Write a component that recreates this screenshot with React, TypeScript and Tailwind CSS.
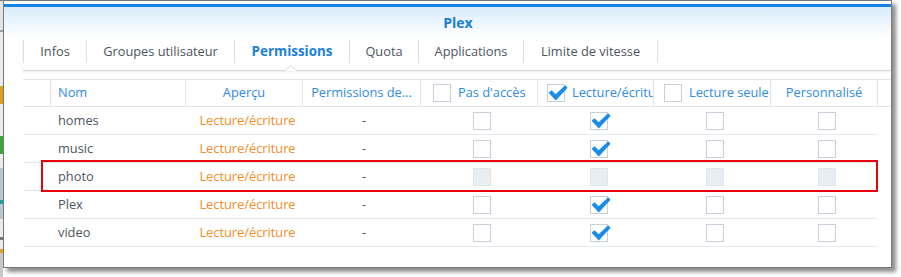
import clsx from "clsx";

type Row = {
  name: string;
  disabled?: boolean;
  rw: boolean;
};

const rows: Row[] = [
  { name: "homes", rw: true },
  { name: "music", rw: true },
  { name: "photo", rw: false, disabled: true },
  { name: "Plex", rw: true },
  { name: "video", rw: true },
];

const tabs = [
  { label: "Infos", w: "w-[63px]" },
  { label: "Groupes utilisateur", w: "w-[148px]" },
  { label: "Permissions", w: "w-[115px]", active: true },
  { label: "Quota", w: "w-[69px]" },
  { label: "Applications", w: "w-[105px]" },
  { label: "Limite de vitesse", w: "w-[135px]", last: true },
];

const cols = "grid grid-cols-[27px_135px_117px_118px_117px_116px_117px_107px]";

function Check({ checked, disabled }: { checked?: boolean; disabled?: boolean }) {
  return (
    <span
      className={clsx(
        "relative block w-[18px] h-[18px] shrink-0 border",
        disabled ? "bg-[#e9eef3] border-[#dfe5eb]" : "bg-white border-[#c7d0da]"
      )}
    >
      {checked && (
        <svg className="absolute -left-px -top-px overflow-visible" width="20" height="20" viewBox="0 0 20 20">
          <polygon points="1.6,8.8 4.6,6.2 8.6,10.2 18.2,1.2 20.6,3.8 8.8,16.4" fill="#1b8ce8" />
        </svg>
      )}
    </span>
  );
}

function LeftStrip() {
  return (
    <div className="w-[3px] flex flex-col shrink-0">
      <div className="h-px bg-[#7d7d7d]" />
      <div className="h-[29px] bg-[#e4e4e4]" />
      <div className="h-[2px] bg-[#a0a0a0]" />
      <div className="h-[54px] bg-[#ececec]" />
      <div className="h-[18px] bg-[#e0a020]" />
      <div className="h-[32px] bg-[#ececec]" />
      <div className="h-[18px] bg-[#3aa53a]" />
      <div className="h-[14px] bg-[#ececec]" />
      <div className="h-[32px] bg-[#b9c8d4]" />
      <div className="h-[4px] bg-[#1fa0a0]" />
      <div className="h-[15px] bg-[#b9c8d4]" />
      <div className="h-[18px] bg-[#ececec]" />
      <div className="h-[3px] bg-[#777]" />
      <div className="h-[9px] bg-[#ececec]" />
      <div className="h-[4px] bg-[#e0a020]" />
      <div className="flex-1 bg-[#c8c8c8]" />
    </div>
  );
}

export default function App() {
  return (
    <div
      className="relative w-[901px] h-[277px] bg-white overflow-hidden flex"
      style={{ fontFamily: '"Open Sans", "Noto Sans", sans-serif' }}
    >
      <LeftStrip />
      <div className="w-[889px] h-[268px] border border-[#7a7a7a] bg-white shadow-[4px_4px_4px_rgba(0,0,0,0.45)] flex flex-col">
        <div className="h-[3px] bg-white" />
        <div className="h-[3px] bg-[#1683e0]" />
        <div className="h-[31px] bg-gradient-to-b from-[#d9ecfc] to-white flex items-center justify-center pl-[21px]">
          <span className="text-[14px] font-bold text-[#1b7dd4]">Plex</span>
        </div>

        <div className="relative ml-[19px] h-[33px] border-b border-[#d5dadf] shadow-[0_1px_2px_rgba(0,0,0,0.08)] pt-[2px] flex items-start">
          {tabs.map((t) => (
            <div
              key={t.label}
              className={clsx(
                "h-[23px] flex items-center justify-center border-l border-[#d8e0e8] whitespace-nowrap",
                t.w,
                t.last && "border-r",
                t.active ? "font-bold text-[13.4px] text-[#1b80dc]" : "text-[12.8px] text-[#4c5560]"
              )}
            >
              {t.label}
            </div>
          ))}
          <svg className="absolute left-[262px] -bottom-px" width="12" height="6" viewBox="0 0 12 6">
            <polygon points="0,6 6,0 12,6" fill="white" />
            <polyline points="0,5.5 6,0.5 12,5.5" fill="none" stroke="#d5dadf" strokeWidth="1" />
          </svg>
        </div>

        <div className="ml-[19px] mt-[8px] text-[12.8px]">
          <div className="grid grid-cols-[27px_135px_117px_118px_117px_116px_117px_107px_13px] h-[28px] border-y border-[#e1e6eb] text-[#2e8be0]">
            <div />
            <div className="border-l border-[#e1e6eb] flex items-center pl-[7px]">Nom</div>
            <div className="border-l border-[#e1e6eb] flex items-center justify-center">Aperçu</div>
            <div className="border-l border-[#e1e6eb] flex items-center justify-center whitespace-nowrap">Permissions de...</div>
            <div className="border-l border-[#e1e6eb] flex items-center pl-[12px] gap-[7px] whitespace-nowrap overflow-hidden">
              <Check />
              <span>Pas d'accès</span>
            </div>
            <div className="border-l border-[#e1e6eb] flex items-center pl-[9px] gap-[7px] whitespace-nowrap overflow-hidden">
              <Check checked />
              <span>Lecture/écriture</span>
            </div>
            <div className="border-l border-[#e1e6eb] flex items-center pl-[10px] gap-[7px] whitespace-nowrap overflow-hidden">
              <Check />
              <span>Lecture seule</span>
            </div>
            <div className="border-l border-[#e1e6eb] flex items-center justify-center">Personnalisé</div>
            <div className="border-l border-[#e1e6eb]" />
          </div>

          {rows.map((r) => (
            <div key={r.name} className={clsx(cols, "h-[28px] w-[854px] border-b border-[#e5e9ee]")}>
              <div />
              <div className="flex items-center pl-[8px] text-[#4c5560]">{r.name}</div>
              <div className="flex items-center justify-center pl-[8px] text-[#f28c28]">Lecture/écriture</div>
              <div className="flex items-center justify-center pl-[6px] text-[#4c5560]">-</div>
              <div className="flex items-center justify-center pl-[7px] pt-[1px]">
                <Check disabled={r.disabled} />
              </div>
              <div className="flex items-center justify-center pl-[7px] pt-[1px]">
                <Check checked={r.rw} disabled={r.disabled} />
              </div>
              <div className="flex items-center justify-center pl-[7px] pt-[1px]">
                <Check disabled={r.disabled} />
              </div>
              <div className="flex items-center justify-center pl-[7px] pt-[1px]">
                <Check disabled={r.disabled} />
              </div>
            </div>
          ))}
        </div>
      </div>

      <div className="absolute left-[41px] top-[160px] w-[837px] h-[32px] border-2 border-[#e8000b]" />
    </div>
  );
}
